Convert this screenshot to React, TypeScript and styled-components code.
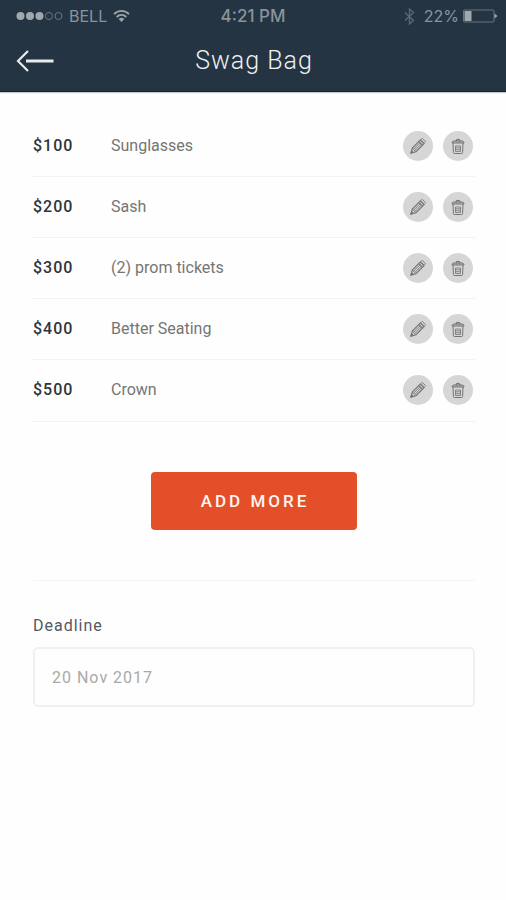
import React, { useState } from "react";
import styled, { createGlobalStyle } from "styled-components";

const GlobalStyle = createGlobalStyle`
  * { box-sizing: border-box; }
  body {
    margin: 0;
    background: #fefefe;
    font-family: Roboto, "Liberation Sans", sans-serif;
    font-size: 16px;
    line-height: 20px;
  }
`;

const Header = styled.header`
  background: #253443;
  border-bottom: 1px solid #0f2340;
  box-shadow: 0 1px 1px #c3c9cd;
`;

const StatusBar = styled.div`
  display: grid;
  grid-template-columns: 1fr auto 1fr;
  align-items: center;
  height: 32px;
  padding: 0 8px;
  color: #89939c;
  font-family: Inter, "Liberation Sans", sans-serif;
`;

const StatusGroup = styled.div<{ $end?: boolean }>`
  display: flex;
  align-items: center;
  justify-content: ${(p) => (p.$end ? "flex-end" : "flex-start")};
  gap: ${(p) => (p.$end ? "4px" : "6px")};
  padding-left: 8px;
`;

const Clock = styled.time`
  font-size: 17px;
  font-weight: 500;
`;

const TitleBar = styled.div`
  display: grid;
  grid-template-columns: 1fr auto 1fr;
  align-items: center;
  height: 59px;
  padding: 0 14px 2px 16px;
`;

const BackButton = styled.button`
  display: flex;
  justify-self: start;
  padding: 0;
  border: 0;
  background: none;
  color: #e8ebed;
  cursor: pointer;
`;

const Title = styled.h1`
  margin: 0;
  color: #eef0f1;
  font-size: 25px;
  line-height: 32px;
  font-weight: 300;
  letter-spacing: 1px;
`;

const Content = styled.main`
  padding: 24px 31px 0 33px;
`;

const ItemList = styled.ul`
  margin: 0;
  padding: 0;
  list-style: none;
`;

const Item = styled.li`
  display: flex;
  align-items: center;
  padding: 15px 2px 15px 0;
  border-bottom: 1px solid #f2f2f2;

  &:last-child {
    padding-bottom: 16px;
  }
`;

const Price = styled.span`
  width: 78px;
  color: #30343b;
  font-weight: 500;
  letter-spacing: 1px;
`;

const Name = styled.span`
  flex: 1;
  color: #757575;
`;

const Actions = styled.div`
  display: flex;
  gap: 10px;
`;

const IconButton = styled.button`
  display: grid;
  place-items: center;
  width: 30px;
  height: 30px;
  padding: 0;
  border: 0;
  border-radius: 50%;
  background: #d6d6d6;
  color: #747474;
  cursor: pointer;
`;

const AddSection = styled.section`
  display: flex;
  justify-content: center;
  padding: 50px 0;
  border-bottom: 1px solid #f4f4f4;
`;

const AddButton = styled.button`
  padding: 19px 48px 19px 50px;
  border: 0;
  border-radius: 4px;
  background: #e34f29;
  color: #fff5f0;
  font: 500 17px/20px Roboto, "Liberation Sans", sans-serif;
  letter-spacing: 3px;
  cursor: pointer;
`;

const Field = styled.div`
  display: flex;
  flex-direction: column;
  gap: 11px;
  padding-top: 35px;
`;

const FieldLabel = styled.label`
  color: #55585e;
  letter-spacing: 1px;
`;

const TextInput = styled.input`
  width: 100%;
  height: 60px;
  padding: 0 17px;
  border: 2px solid #f0f0f0;
  border-radius: 5px;
  background: #fefefe;
  color: #a9a9a9;
  font: 400 16px/20px Roboto, "Liberation Sans", sans-serif;
  letter-spacing: 1px;
`;

const SignalIcon = () => (
  <svg width="47" height="10" viewBox="0 0 47 10" aria-hidden="true">
    <g fill="#a0a8af">
      <circle cx="4.5" cy="5" r="4" />
      <circle cx="14" cy="5" r="4" />
      <circle cx="23.5" cy="5" r="4" />
    </g>
    <g fill="none" stroke="#6c7882">
      <circle cx="33" cy="5" r="3.5" />
      <circle cx="42.5" cy="5" r="3.5" />
    </g>
  </svg>
);

const WifiIcon = () => (
  <svg width="17" height="14" viewBox="0 0 17 14" fill="none" stroke="#9ca5ac" strokeWidth="1.9" aria-hidden="true">
    <path d="M1 5.2C5.2.8 11.8.8 16 5.2M3.7 8c2.8-2.8 6.8-2.8 9.6 0" />
    <path d="M5.7 9.9c1.6-1.5 4-1.5 5.6 0L8.5 12.9z" fill="#9ca5ac" stroke="none" />
  </svg>
);

const BluetoothIcon = () => (
  <svg width="16" height="17" viewBox="0 0 16 17" fill="none" stroke="#5d6973" strokeWidth="1.3" aria-hidden="true">
    <path d="M1 4.5l8.5 8L5.5 16V1l4 3.5-8.5 8" />
  </svg>
);

const BatteryIcon = () => (
  <svg width="35" height="14" viewBox="0 0 35 14" aria-hidden="true">
    <rect x="0.5" y="1" width="30.5" height="12" rx="1" fill="none" stroke="#697580" />
    <rect x="1.5" y="2" width="7" height="10" fill="#a0a8af" />
    <path d="M31.5 4.5l3 2.5-3 2.5z" fill="#9ca5ac" />
  </svg>
);

const BackArrow = () => (
  <svg width="38" height="24" viewBox="0 0 38 24" fill="none" stroke="currentColor" aria-hidden="true">
    <path d="M12 2L2 12l10 10" strokeWidth="2.2" />
    <path d="M10 12h27.5" strokeWidth="3" />
  </svg>
);

const PencilIcon = () => (
  <svg width="18" height="18" viewBox="0 0 18 18" fill="none" stroke="currentColor" strokeWidth="1.1" aria-hidden="true">
    <path d="M2 16l1.3-5L11.5 2.8l3.7 3.7L7 14.7z" />
    <path d="M12.3 2l1-.6 3.2 3.2-.6 1M3.3 11L7 14.7M4.5 12.3l8.2-8.2M5.8 13.5l8.2-8.2M9.7 4.7l3.6 3.6" strokeWidth="0.9" />
    <path d="M2 16l.6-2.3 1.7 1.7z" fill="currentColor" />
  </svg>
);

const TrashIcon = () => (
  <svg width="14" height="17" viewBox="0 0 14 17" fill="none" stroke="currentColor" aria-hidden="true">
    <path d="M1 5c0-1.4 1-2 2-2h8c1 0 2 .6 2 2z" fill="#b4b4b4" />
    <path d="M5 3C5.5.8 8.5.8 9 3" strokeWidth="1.4" />
    <path d="M2 5l.4 9.5q.1 1 1 1h7.2q.9 0 1-1L12 5" />
    <path d="M4.5 8h5v5.5h-5zM4.5 9.8h5M4.5 11.7h5" strokeWidth="0.8" />
  </svg>
);

const items = [
  { price: "$100", name: "Sunglasses" },
  { price: "$200", name: "Sash" },
  { price: "$300", name: "(2) prom tickets" },
  { price: "$400", name: "Better Seating" },
  { price: "$500", name: "Crown" },
];

export default function App() {
  const [deadline, setDeadline] = useState("20 Nov 2017");

  return (
    <>
      <GlobalStyle />
      <Header>
        <StatusBar>
          <StatusGroup>
            <SignalIcon />
            <span>BELL</span>
            <WifiIcon />
          </StatusGroup>
          <Clock>4:21 PM</Clock>
          <StatusGroup $end>
            <BluetoothIcon />
            <span>22%</span>
            <BatteryIcon />
          </StatusGroup>
        </StatusBar>
        <TitleBar>
          <BackButton type="button" aria-label="Back">
            <BackArrow />
          </BackButton>
          <Title>Swag Bag</Title>
        </TitleBar>
      </Header>
      <Content>
        <ItemList>
          {items.map((item) => (
            <Item key={item.price}>
              <Price>{item.price}</Price>
              <Name>{item.name}</Name>
              <Actions>
                <IconButton type="button" aria-label={`Edit ${item.name}`}>
                  <PencilIcon />
                </IconButton>
                <IconButton type="button" aria-label={`Delete ${item.name}`}>
                  <TrashIcon />
                </IconButton>
              </Actions>
            </Item>
          ))}
        </ItemList>
        <AddSection>
          <AddButton type="button">ADD MORE</AddButton>
        </AddSection>
        <Field>
          <FieldLabel htmlFor="deadline">Deadline</FieldLabel>
          <TextInput id="deadline" type="text" value={deadline} onChange={(e) => setDeadline(e.target.value)} />
        </Field>
      </Content>
    </>
  );
}
